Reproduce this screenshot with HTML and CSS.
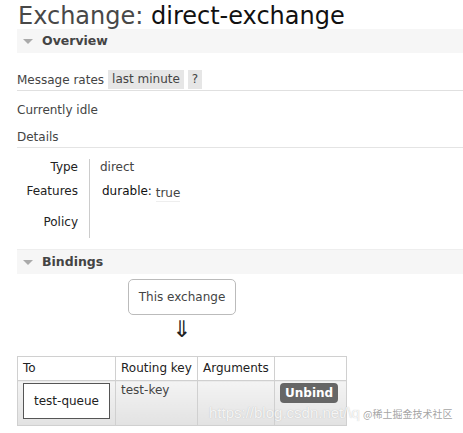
FILE: index.html
```html
<!DOCTYPE html>
<html>
<head>
<meta charset="utf-8">
<link rel="stylesheet" href="styles.css">
</head>
<body>
<div class="page">
  <h1 class="title"><span class="title-kind">Exchange:</span> <b class="title-name">direct-exchange</b></h1>

  <div class="section-head"><span class="tri"></span>Overview</div>

  <div class="rates">
    <span class="rates-label">Message rates</span>
    <span class="pill">last minute</span>
    <span class="pill">?</span>
  </div>

  <p class="idle">Currently idle</p>

  <div class="details-head">Details</div>

  <div class="details">
    <div class="labels">
      <div class="lab lab-type">Type</div>
      <div class="lab lab-feat">Features</div>
      <div class="lab lab-policy">Policy</div>
    </div>
    <div class="values">
      <div class="val val-type">direct</div>
      <div class="val val-feat">durable: <span class="tru">true</span></div>
      <div class="val val-policy"></div>
    </div>
  </div>

  <div class="section-head bindings-head"><span class="tri"></span>Bindings</div>

  <div class="bindings">
    <div class="diagram">
      <div class="this-ex">This exchange</div>
      <div class="arrow">⇓</div>
    </div>
    <table class="btable">
      <thead>
        <tr><th class="c-to">To</th><th class="c-rk">Routing key</th><th class="c-args">Arguments</th><th class="c-act"></th></tr>
      </thead>
      <tbody>
        <tr>
          <td class="c-to"><span class="queue">test-queue</span></td>
          <td class="c-rk">test-key</td>
          <td class="c-args"></td>
          <td class="c-act"><span class="unbind">Unbind</span></td>
        </tr>
      </tbody>
    </table>
  </div>

  <div class="watermark"><span class="wm-url">https://blog.csdn.net/\q</span><span class="wm-cn">@稀土掘金技术社区</span></div>
</div>
</body>
</html>
```

FILE: styles.css
```css
html, body {
  margin: 0;
  padding: 0;
  background: #fff;
}
body {
  font-family: "DejaVu Sans", Verdana, sans-serif;
  font-size: 12px;
  color: #444;
}
.page {
  position: relative;
  padding: 4px 0 0 17px;
  height: 429px;
  overflow: hidden;
}
.title {
  margin: 0 0 0 1px;
  height: 25px;
  line-height: 25px;
  font-size: 24px;
  font-weight: normal;
  color: #484848;
  white-space: nowrap;
}
.title-name {
  font-weight: normal;
  color: #111;
}
.section-head {
  height: 24px;
  line-height: 24px;
  background: #f6f6f6;
  font-weight: bold;
  font-size: 12.5px;
  color: #444;
  display: flex;
  align-items: center;
}
.tri {
  width: 0;
  height: 0;
  border-left: 5px solid transparent;
  border-right: 5px solid transparent;
  border-top: 5px solid #aaa;
  margin: 1px 9px 0 6px;
}
.rates {
  margin-top: 17px;
  height: 19px;
  display: flex;
  align-items: center;
  gap: 4px;
  border-bottom: 1px solid #e0e0e0;
  padding-bottom: 1px;
}
.pill {
  background: #e6e6e6;
  height: 19px;
  line-height: 19px;
  padding: 0 4px;
}
.idle {
  margin: 11px 0 0;
  line-height: 16px;
}
.details-head {
  margin-top: 11px;
  line-height: 16px;
  padding-bottom: 2px;
  border-bottom: 1px solid #e4e4e4;
}
.details {
  display: flex;
  margin-top: 11px;
  padding-bottom: 11px;
  border-bottom: 1px solid #eee;
}
.labels {
  width: 61px;
  padding-right: 11px;
  text-align: right;
  color: #222;
}
.lab {
  line-height: 16px;
}
.lab-feat { margin-top: 8px; }
.lab-policy { margin-top: 15px; }
.values {
  border-left: 1px solid #ccc;
  height: 79px;
  padding-left: 10px;
}
.val {
  line-height: 16px;
}
.val-feat { margin-top: 8px; color: #111; padding-left: 2px; }
.tru {
  color: #444;
  display: inline-block;
  position: relative;
  top: 2px;
  border-bottom: 1px solid #eee;
  line-height: 15px;
}
.bindings {
  width: 330px;
}
.diagram {
  display: flex;
  flex-direction: column;
  align-items: center;
  padding-top: 5px;
}
.this-ex {
  width: 106px;
  height: 34px;
  line-height: 34px;
  border: 1px solid #bbb;
  border-radius: 5px;
  text-align: center;
  color: #444;
}
.arrow {
  margin-top: 4px;
  font-size: 23px;
  line-height: 20px;
  color: #222;
}
.btable {
  margin-top: 17px;
  border-collapse: collapse;
  width: 330px;
}
.btable th, .btable td {
  border: 1px solid #d0d0d0;
  text-align: left;
  vertical-align: top;
  padding: 0 5px;
}
.btable th {
  font-weight: normal;
  color: #222;
  height: 23px;
  line-height: 23px;
  background: #fff;
}
.btable tbody td {
  height: 42px;
  background: linear-gradient(#f4f4f4, #e2e2e2);
  color: #444;
  padding-top: 2px;
}
.c-to { width: 87px; }
.c-rk { width: 71px; }
.c-args { width: 66px; }
.c-act { width: 61px; }
.btable tbody td.c-to {
  padding: 2px 5px 0 5px;
}
.queue {
  display: block;
  width: 85px;
  height: 34px;
  line-height: 34px;
  border: 1px solid #555;
  background: #fff;
  text-align: center;
  color: #222;
}
.btable tbody td.c-act {
  padding-top: 2px;
}
.unbind {
  display: inline-block;
  background: #666;
  color: #fff;
  font-weight: bold;
  border-radius: 4px;
  height: 20px;
  line-height: 20px;
  padding: 0 5px;
}
.watermark {
  position: absolute;
  left: 209px;
  top: 404px;
  display: flex;
  align-items: baseline;
  gap: 3px;
  white-space: nowrap;
  pointer-events: none;
}
.wm-url {
  font-family: "Liberation Sans", sans-serif;
  font-size: 15px;
  color: rgba(255,255,255,0.85);
  text-shadow: 0 0 1px rgba(150,150,150,0.6);
}
.wm-cn {
  font-family: "Noto Sans CJK SC", sans-serif;
  font-size: 10px;
  color: rgba(140,140,140,0.8);
}
```
